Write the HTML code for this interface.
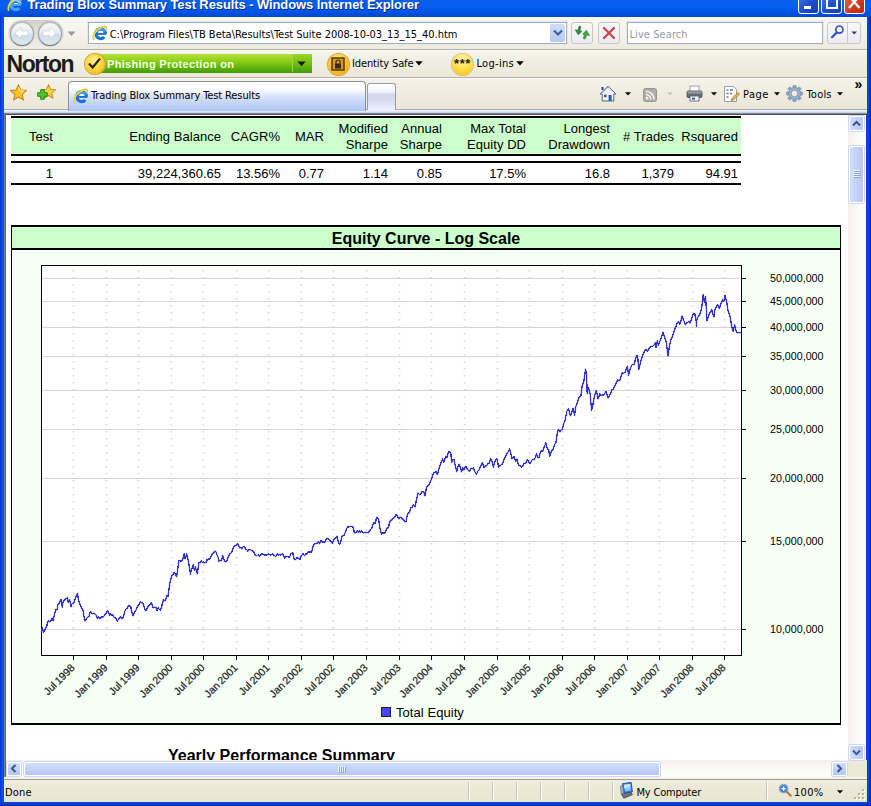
<!DOCTYPE html>
<html>
<head>
<meta charset="utf-8">
<title>Trading Blox Summary Test Results - Windows Internet Explorer</title>
<style>
html,body{margin:0;padding:0;}
body{width:871px;height:806px;overflow:hidden;position:relative;background:#0b3fd2;font-family:"DejaVu Sans Condensed","DejaVu Sans","Liberation Sans",sans-serif;font-size:11px;color:#000;}
.abs{position:absolute;}
.tah{font:11px/14px "DejaVu Sans Condensed","DejaVu Sans","Liberation Sans",sans-serif;white-space:nowrap;letter-spacing:-0.12px;}
#win{position:absolute;left:0;top:0;width:871px;height:806px;background:#0a41d4;}
#win:before{content:"";position:absolute;left:0;top:0;width:4px;height:806px;background:linear-gradient(to right,#0831d9,#0a44e8 40%,#1158ee 70%,#0a3fd0);}
#win:after{content:"";position:absolute;right:0;top:0;width:4px;height:806px;background:linear-gradient(to right,#0a3fd0,#0a44e0 40%,#0831c9 70%,#04219a);}
#winbot{position:absolute;left:0;top:802px;width:871px;height:4px;background:linear-gradient(#0a44dc,#0a3cd0 50%,#04259e);}
#titlebar{position:absolute;left:0;top:0;width:871px;height:17px;overflow:hidden;background:linear-gradient(to bottom,#0a5ce6 0,#0560f0 5px,#0355e6 11px,#0148d2 17px);}
#titletext{position:absolute;left:27.4px;top:-3.4px;font:bold 13px/16px "Liberation Sans",sans-serif;color:#fff;white-space:nowrap;letter-spacing:-0.1px;text-shadow:1px 1px 0 #0a2a8a;}
.tbtn{position:absolute;top:-8px;height:22px;width:21px;border:1px solid #fff;border-radius:3px;box-sizing:border-box;}
#chrome{position:absolute;left:4px;top:17px;width:863px;height:96px;background:#efecdf;}
#navbar{position:absolute;left:0;top:0;width:863px;height:32px;background:linear-gradient(to bottom,#f9f9f5,#f4f3ec 50%,#eeebe0);border-top:1px solid #fff;box-sizing:border-box}
#nortonbar{position:absolute;left:0;top:32px;width:863px;height:28px;background:linear-gradient(to bottom,#f6f5ec,#efede1 50%,#ece9db);border-top:1px solid #b4b1a3;box-shadow:inset 0 1px 0 #fbfaf6;box-sizing:border-box;}
#tabbar{position:absolute;left:0;top:60px;width:863px;height:33px;background:linear-gradient(to bottom,#f5f3ea,#efecdf 50%,#ebe7d7);border-top:1px solid #b4b1a3;border-bottom:1px solid #a9aab0;box-shadow:inset 0 1px 0 #fbfaf6;box-sizing:border-box;}
#tabstrip{position:absolute;left:0;top:93px;width:863px;height:5px;background:linear-gradient(#f2f6fe 0,#dde6fa 30%,#c2cce4 58%,#8b909c 62%,#7a7e88 80%,#4a4d53 82%,#4a4d53 100%)}
#content{position:absolute;left:6px;top:115px;width:842px;height:645px;background:#fff;}
#cleft{position:absolute;left:4px;top:113px;width:2px;height:665px;background:linear-gradient(to right,#8c8e90,#55575a);}
#vscroll{position:absolute;left:848px;top:115px;width:18px;height:646px;background:linear-gradient(to right,#f1f0ea,#fbfaf8 50%,#fefefd);}
#hscroll{position:absolute;left:6px;top:760px;width:842px;height:17px;background:linear-gradient(#f1f0ea,#fbfaf8 50%,#fefefd);}
#corner{position:absolute;left:848px;top:760px;width:19px;height:17px;background:#ece9d8;}
#statusbar{position:absolute;left:4px;top:777px;width:863px;height:25px;background:linear-gradient(#f6f5ef 0,#f3f2ea 2px,#9f9c8a 2px,#9f9c8a 3px,#f1efe3 3px,#ece9d8 9px,#e9e5d4 100%);}

.th{position:absolute;letter-spacing:0.04px;font:13px/16px "Liberation Sans",sans-serif;text-align:right;white-space:nowrap;color:#000;}
.td{position:absolute;font:13px/16px "Liberation Sans",sans-serif;text-align:right;white-space:nowrap;color:#000;}
.ctitle{position:absolute;font:bold 16px/18px "Liberation Sans",sans-serif;text-align:center;color:#000;}
.ytitle{position:absolute;font:bold 16px/18px "Liberation Sans",sans-serif;white-space:nowrap;color:#000;}
</style>
</head>
<body>
<div id="win"></div><div id="winbot"></div>
<div id="titlebar">
<svg class="abs" style="left:7px;top:-4px" width="16" height="16" viewBox="0 0 16 16"><path d="M13.5 8.6A4.9 4.9 0 1 0 12.3 12" fill="none" stroke="#4aa2f2" stroke-width="3.2"/><path d="M13.1 7.2A4.9 4.9 0 0 0 4.2 6.2" fill="none" stroke="#86c6fb" stroke-width="2.8"/><path d="M4.4 8.8H14.4" stroke="#4aa2f2" stroke-width="2.2"/><path d="M6.8 7.4h4.2" stroke="#fff" stroke-width="1"/><path d="M1.6 14.2C-.2 10.2 4.6 3.4 11 1.6c2.4-.6 3.8.3 3.4 2.2" stroke="#e6c22a" stroke-width="1.7" fill="none" stroke-linecap="round"/><path d="M1.8 13.6C.8 10.4 4.8 4.4 10 2.4" stroke="#f8e878" stroke-width=".7" fill="none"/></svg>
<div id="titletext">Trading Blox Summary Test Results - Windows Internet Explorer</div>
<div class="tbtn" style="left:798px;background:linear-gradient(135deg,#3f78ee,#1c4cc8 60%,#1540b4)"><div class="abs" style="left:5px;top:13px;width:7px;height:3px;background:#fff"></div></div>
<div class="tbtn" style="left:821px;background:linear-gradient(135deg,#3f78ee,#1c4cc8 60%,#1540b4)"><div class="abs" style="left:4px;top:0px;width:8px;height:11px;border:2px solid #fff;border-top-width:3px"></div></div>
<div class="tbtn" style="left:844px;background:linear-gradient(135deg,#e8694a,#d03a1c 60%,#b82a10)"><svg class="abs" style="left:1px;top:3px" width="17" height="16" viewBox="0 0 17 16"><path d="M3 0L13.5 12M13.5 0L3 12" stroke="#fff" stroke-width="2.4"/></svg></div>
</div>
<div id="chrome"><div id="navbar"></div><div id="nortonbar"></div><div id="tabbar"></div><div id="tabstrip"></div></div>
<div class="abs" style="left:7.5px;top:19.5px;width:56px;height:28px;border-radius:14px;background:linear-gradient(#cfcec8,#e4e2da 40%,#f0eee6);"></div>
<div class="abs" style="left:9.5px;top:21.5px;width:24px;height:24px;border-radius:50%;box-sizing:border-box;border:1px solid #9aa0a8;border-bottom-color:#6c727c;border-top-color:#b4b4b0;background:linear-gradient(#f6f8fa 0,#e6ecf1 45%,#cfdde8 55%,#ddeaf2 100%);box-shadow:0 0 1.5px #8a8a86"></div>
<div class="abs" style="left:37.5px;top:21.5px;width:24px;height:24px;border-radius:50%;box-sizing:border-box;border:1px solid #9aa0a8;border-bottom-color:#6c727c;border-top-color:#b4b4b0;background:linear-gradient(#f6f8fa 0,#e6ecf1 45%,#cfdde8 55%,#ddeaf2 100%);box-shadow:0 0 1.5px #8a8a86"></div>
<svg class="abs" style="left:9px;top:21px" width="54" height="24" viewBox="0 0 54 24"><path d="M6 12.2l6-5.6v3.4h7v4.4h-7v3.4z" fill="#fff" stroke="#c4ccd4" stroke-width=".6"/><path d="M47 12.2l-6-5.6v3.4h-7v4.4h7v3.4z" fill="#fff" stroke="#c4ccd4" stroke-width=".6"/></svg>
<svg class="abs" style="left:67px;top:31px" width="9" height="6" viewBox="0 0 9 6"><path d="M0.5 0.5h8L4.5 5z" fill="#9a9a96"/></svg>
<div class="abs" style="left:88px;top:22px;width:479px;height:22px;box-sizing:border-box;border:1px solid #9fb0c2;background:#fff;box-shadow:0 0 0 1px #e9e9e2"></div>
<svg class="abs" style="left:92px;top:25px" width="16" height="16" viewBox="0 0 16 16"><path d="M13.5 8.6A4.9 4.9 0 1 0 12.3 12" fill="none" stroke="#1c72d0" stroke-width="3.2"/><path d="M13.1 7.2A4.9 4.9 0 0 0 4.2 6.2" fill="none" stroke="#3c9aec" stroke-width="2.8"/><path d="M4.4 8.8H14.4" stroke="#1c72d0" stroke-width="2.2"/><path d="M6.8 7.4h4.2" stroke="#fff" stroke-width="1"/><path d="M1.6 14.2C-.2 10.2 4.6 3.4 11 1.6c2.4-.6 3.8.3 3.4 2.2" stroke="#e6c22a" stroke-width="1.7" fill="none" stroke-linecap="round"/><path d="M1.8 13.6C.8 10.4 4.8 4.4 10 2.4" stroke="#f8e878" stroke-width=".7" fill="none"/></svg>
<div class="abs tah" style="left:109.7px;top:27.5px;letter-spacing:-0.01px">C:\Program Files\TB Beta\Results\Test Suite 2008-10-03_13_15_40.htm</div>
<div class="abs" style="left:550px;top:24px;width:15px;height:18px;background:linear-gradient(#cddcf8,#b7caf2);border-radius:2px"></div>
<svg class="abs" style="left:553px;top:29px" width="10" height="8" viewBox="0 0 10 8"><path d="M1 1.5l4 4 4-4" stroke="#3a5a9a" stroke-width="2" fill="none"/></svg>
<div class="abs" style="left:571px;top:22px;width:22px;height:22px;box-sizing:border-box;border:1px solid #c9c7c1;border-radius:3px;background:linear-gradient(#f8f7fa,#ecebf2)"></div>
<div class="abs" style="left:598px;top:22px;width:22px;height:22px;box-sizing:border-box;border:1px solid #c9c7c1;border-radius:3px;background:linear-gradient(#f8f7fa,#ecebf2)"></div>
<svg class="abs" style="left:574px;top:25px" width="16" height="16" viewBox="0 0 16 16"><path d="M5 1.1L7 1.7 5.9 5.6 8 6.2 4.2 9.9 1.2 4.8 3.8 5.3z" fill="#2e8e3a" stroke="#1c6426" stroke-width=".5"/><path d="M11.2 14.1L9.2 13.5 10.4 9.6 8.6 9.1 12.4 5.3 15.6 10.4 12.8 9.9z" fill="#44aa48" stroke="#1c6426" stroke-width=".5"/></svg>
<svg class="abs" style="left:602px;top:26px" width="14" height="14" viewBox="0 0 14 14"><path d="M2 2l10 10M12 2L2 12" stroke="#c8474a" stroke-width="2.3" stroke-linecap="round"/></svg>
<div class="abs" style="left:627px;top:22px;width:196px;height:22px;box-sizing:border-box;border:1px solid #9fb0c2;background:#fff;box-shadow:0 0 0 1px #e9e9e2"></div>
<div class="abs tah" style="left:629.5px;top:27.5px;letter-spacing:0.08px;color:#9a9a9a">Live Search</div>
<div class="abs" style="left:827px;top:22px;width:34px;height:22px;box-sizing:border-box;border:1px solid #ccc9c2;border-radius:3px;background:linear-gradient(#f8f7fa,#ecebf2)"></div>
<div class="abs" style="left:847px;top:23px;width:1px;height:20px;background:#c9c7c0"></div>
<svg class="abs" style="left:830px;top:24px" width="16" height="16" viewBox="0 0 16 16"><circle cx="9.4" cy="5.6" r="3.6" fill="#eef4ff" stroke="#2d55b8" stroke-width="1.7"/><path d="M6.6 8.6L2 13.2" stroke="#2d55b8" stroke-width="2.2" stroke-linecap="round"/></svg>
<svg class="abs" style="left:850.5px;top:30.5px" width="6.5" height="4" viewBox="0 0 8 5"><path d="M0.5 0.5h7L4 4.5z" fill="#2a3a6a"/></svg>
<div class="abs" style="left:6.5px;top:50.5px;font:bold 23px/26px 'Liberation Sans',sans-serif;letter-spacing:-1.45px;color:#1c1c1c;transform-origin:0 0;transform:scaleY(1.0)">Norton</div>
<div class="abs" style="left:92px;top:54px;width:220px;height:19px;border-radius:2px;background:linear-gradient(#b5e23a 0,#8fd01a 35%,#62b40e 70%,#3f9a0c 100%)"></div>
<div class="abs" style="left:292px;top:55px;width:1px;height:17px;background:#9ed25a"></div>
<div class="abs" style="left:293px;top:54px;width:19px;height:19px;background:linear-gradient(#9fd62a 0,#74be12 50%,#3f9a0c 100%)"></div>
<svg class="abs" style="left:297px;top:61px" width="9" height="6" viewBox="0 0 9 6"><path d="M0.3 0.5h8.4L4.5 5.2z" fill="#10200a"/></svg>
<div class="abs" style="left:107px;top:56.5px;font:bold 11px/14px 'Liberation Sans',sans-serif;color:#f4ffe0;letter-spacing:0.31px;white-space:nowrap">Phishing Protection on</div>
<div class="abs" style="left:84.5px;top:53.5px;width:20px;height:20px;border-radius:50%;background:radial-gradient(circle at 45% 35%,#fff0a0 0,#fcd83a 45%,#f0a818 100%);box-shadow:0 0 0 1px #d8a030"></div>
<svg class="abs" style="left:86px;top:56px" width="18" height="15" viewBox="0 0 18 15"><path d="M3 7.5l3.6 4L14 2.6" stroke="#2a2410" stroke-width="2.2" fill="none"/></svg>
<div class="abs" style="left:327.5px;top:53.5px;width:21px;height:21px;border-radius:50%;background:radial-gradient(circle at 45% 30%,#ffe88a 0,#f8c020 55%,#f0a010 100%);box-shadow:0 0 0 1px #e0a030"></div>
<svg class="abs" style="left:331px;top:57px" width="14" height="14" viewBox="0 0 14 14"><rect x="1" y="1" width="12" height="12" fill="#d69a20" stroke="#4a3010" stroke-width="1.4"/><rect x="4" y="6.5" width="6" height="5" fill="#3a2a18"/><path d="M5 6.8V5a2 2 0 014 0v1.8" stroke="#3a2a18" stroke-width="1.2" fill="none"/></svg>
<div class="abs tah" style="left:352px;top:57px">Identity Safe</div>
<svg class="abs" style="left:415px;top:61px" width="8" height="5" viewBox="0 0 8 5"><path d="M0.3 0.3h7.4L4 4.6z" fill="#000"/></svg>
<div class="abs" style="left:452px;top:53.5px;width:21px;height:21px;border-radius:50%;background:radial-gradient(circle at 50% 25%,#fff6b0 0,#fde050 50%,#f4c000 100%);box-shadow:0 0 0 1px #dcc070"></div>
<div class="abs" style="left:454px;top:57px;font:bold 13px/14px 'Liberation Sans',sans-serif;letter-spacing:0.6px;color:#201808">***</div>
<div class="abs tah" style="left:476.5px;top:57px;letter-spacing:0.3px">Log-ins</div>
<svg class="abs" style="left:516px;top:61px" width="8" height="5" viewBox="0 0 8 5"><path d="M0.3 0.3h7.4L4 4.6z" fill="#000"/></svg>
<svg class="abs" style="left:10px;top:84px" width="17" height="17" viewBox="0 0 16 16"><path d="M8 0.8l2.2 4.9 5.2.5-3.9 3.5 1.1 5.2L8 12.2l-4.6 2.7 1.1-5.2L.6 6.2l5.2-.5z" fill="#fdc228" stroke="#c8861a" stroke-width="1"/><path d="M8 3l1.4 3.4 3.4.3-2.4 2.2" fill="none" stroke="#ffe890" stroke-width="1"/></svg>
<svg class="abs" style="left:41px;top:84px" width="15" height="15" viewBox="0 0 16 16"><path d="M8 0.8l2.2 4.9 5.2.5-3.9 3.5 1.1 5.2L8 12.2l-4.6 2.7 1.1-5.2L.6 6.2l5.2-.5z" fill="#fdd048" stroke="#c8921a" stroke-width="1.1"/></svg>
<svg class="abs" style="left:37px;top:89px" width="11" height="11" viewBox="0 0 11 11"><path d="M3.7 0.7h3.6v3h3v3.6h-3v3H3.7v-3h-3V3.7h3z" fill="#58c030" stroke="#2a8a1a" stroke-width="1"/></svg>
<div class="abs" style="left:68px;top:81px;width:298px;height:30px;box-sizing:border-box;border:1px solid #8e9096;border-bottom:none;border-radius:4px 4px 0 0;background:linear-gradient(#ffffff 0,#f8fbff 28%,#d3e1fa 52%,#adc6f4 100%)"></div>
<svg class="abs" style="left:73px;top:88px" width="16" height="16" viewBox="0 0 16 16"><path d="M13.5 8.6A4.9 4.9 0 1 0 12.3 12" fill="none" stroke="#1c72d0" stroke-width="3.2"/><path d="M13.1 7.2A4.9 4.9 0 0 0 4.2 6.2" fill="none" stroke="#3c9aec" stroke-width="2.8"/><path d="M4.4 8.8H14.4" stroke="#1c72d0" stroke-width="2.2"/><path d="M6.8 7.4h4.2" stroke="#fff" stroke-width="1"/><path d="M1.6 14.2C-.2 10.2 4.6 3.4 11 1.6c2.4-.6 3.8.3 3.4 2.2" stroke="#e6c22a" stroke-width="1.7" fill="none" stroke-linecap="round"/><path d="M1.8 13.6C.8 10.4 4.8 4.4 10 2.4" stroke="#f8e878" stroke-width=".7" fill="none"/></svg>
<div class="abs tah" style="left:91px;top:89px;letter-spacing:-0.11px">Trading Blox Summary Test Results</div>
<div class="abs" style="left:367px;top:83px;width:29px;height:27px;box-sizing:border-box;border:1px solid #9a9ca2;border-bottom:none;border-radius:3px 3px 0 0;background:linear-gradient(#ffffff 0,#f4f5fc 30%,#d2d6ee 40%,#d8dcf2 65%,#eef0fa 100%)"></div>
<svg class="abs" style="left:599px;top:85px" width="18" height="17" viewBox="0 0 18 17"><path d="M2.5 2h2v3h-2z" fill="#2a3ab8"/><path d="M9 1.2L1 9h2.2v7h11.6V9H17z" fill="#eef2f6" stroke="#55657a" stroke-width="1"/><path d="M9 1.6L1.8 8.6" stroke="#8a98a8" stroke-width="1.3"/><rect x="9.6" y="10" width="3" height="6" fill="#2a5aa8"/><rect x="5" y="9.6" width="2.6" height="2.6" fill="#4a5a70"/></svg>
<svg class="abs" style="left:625px;top:92px" width="6" height="4" viewBox="0 0 6 4"><path d="M0 0.3h6L3 3.6z" fill="#000"/></svg>
<svg class="abs" style="left:643px;top:88px" width="14" height="14" viewBox="0 0 14 14"><rect x=".5" y=".5" width="13" height="13" rx="2" fill="#adada5" stroke="#96968e"/><circle cx="4" cy="10.2" r="1.4" fill="#f2f2ee"/><path d="M2.8 6.4a5 5 0 015 5M2.8 3.2a8.2 8.2 0 018.2 8.2" stroke="#f2f2ee" stroke-width="1.6" fill="none"/></svg>
<svg class="abs" style="left:667px;top:92px" width="6" height="4" viewBox="0 0 6 4"><path d="M0 0.3h6L3 3.6z" fill="#c8c6ba"/></svg>
<svg class="abs" style="left:686px;top:85px" width="17" height="17" viewBox="0 0 17 17"><rect x="4" y="1" width="9" height="6" fill="#fff" stroke="#8a8f98" stroke-width=".8"/><rect x="1" y="6" width="15" height="6.5" rx="1.2" fill="#6a7078" stroke="#42474e" stroke-width=".8"/><rect x="1.5" y="6.4" width="14" height="2" fill="#9aa0a8"/><rect x="4" y="11" width="9" height="5" fill="#f4f6f8" stroke="#555a62" stroke-width=".8"/><rect x="6" y="12.6" width="3" height="2" fill="#3a5ab0"/></svg>
<svg class="abs" style="left:711px;top:92px" width="6" height="4" viewBox="0 0 6 4"><path d="M0 0.3h6L3 3.6z" fill="#000"/></svg>
<svg class="abs" style="left:723px;top:85px" width="18" height="18" viewBox="0 0 18 18"><path d="M1.5 1.5h9l3 3v12h-12z" fill="#fbfbfb" stroke="#9a9ea8" stroke-width="1"/><path d="M3.5 5h2M3.5 8.5h2M3.5 12h2M7 5h3M7 8.5h2" stroke="#6a7a9a" stroke-width="1.3"/><path d="M9 13.5l6-6 1.5 1.5-6 6-2.2.7z" fill="#e8b848" stroke="#8a6a20" stroke-width=".7"/></svg>
<div class="abs tah" style="left:743px;top:87.5px;letter-spacing:0.5px">Page</div>
<svg class="abs" style="left:774px;top:92px" width="6" height="4" viewBox="0 0 6 4"><path d="M0 0.3h6L3 3.6z" fill="#000"/></svg>
<svg class="abs" style="left:786px;top:85px" width="17" height="17" viewBox="0 0 17 17"><g transform="translate(8.5 8.5)"><g fill="#8aa4c0" stroke="#6a88a8" stroke-width=".4"><rect x="-1.7" y="-8.2" width="3.4" height="16.4" rx=".6"/><rect x="-1.7" y="-8.2" width="3.4" height="16.4" rx=".6" transform="rotate(45)"/><rect x="-1.7" y="-8.2" width="3.4" height="16.4" rx=".6" transform="rotate(90)"/><rect x="-1.7" y="-8.2" width="3.4" height="16.4" rx=".6" transform="rotate(135)"/></g><circle r="6" fill="#9ab4d0" stroke="#6a88a8" stroke-width=".6"/><circle r="3.4" fill="#f0ede0" stroke="#6a88a8" stroke-width=".8"/></g></svg>
<div class="abs tah" style="left:806.5px;top:87.5px;letter-spacing:0.2px">Tools</div>
<svg class="abs" style="left:836.5px;top:92px" width="6" height="4" viewBox="0 0 6 4"><path d="M0 0.3h6L3 3.6z" fill="#000"/></svg>
<div class="abs" style="left:854.5px;top:76px;font:bold 14px/16px 'Liberation Sans',sans-serif;letter-spacing:-1px;color:#000">»</div>
<div id="content"></div><div id="cleft"></div>
<div class="abs" style="left:11px;top:116px;width:730px;height:2px;background:#000"></div>
<div class="abs" style="left:11px;top:118px;width:730px;height:36px;background:#ccffcc"></div>
<div class="abs" style="left:11px;top:154px;width:730px;height:2px;background:#000"></div>
<div class="abs" style="left:11px;top:161px;width:730px;height:2px;background:#000"></div>
<div class="abs" style="left:11px;top:183px;width:730px;height:2px;background:#000"></div>
<div class="th" style="right:818px;top:129px">Test</div>
<div class="td" style="right:818px;top:166px">1</div>
<div class="th" style="right:650px;top:129px">Ending Balance</div>
<div class="td" style="right:650px;top:166px">39,224,360.65</div>
<div class="th" style="right:591px;top:129px">CAGR%</div>
<div class="td" style="right:591px;top:166px">13.56%</div>
<div class="th" style="right:547px;top:129px">MAR</div>
<div class="td" style="right:547px;top:166px">0.77</div>
<div class="th" style="right:483px;top:121px">Modified<br>Sharpe</div>
<div class="td" style="right:483px;top:166px">1.14</div>
<div class="th" style="right:429px;top:121px">Annual<br>Sharpe</div>
<div class="td" style="right:429px;top:166px">0.85</div>
<div class="th" style="right:345px;top:121px">Max Total<br>Equity DD</div>
<div class="td" style="right:345px;top:166px">17.5%</div>
<div class="th" style="right:261px;top:121px">Longest<br>Drawdown</div>
<div class="td" style="right:261px;top:166px">16.8</div>
<div class="th" style="right:197px;top:129px"># Trades</div>
<div class="td" style="right:197px;top:166px">1,379</div>
<div class="th" style="right:133px;top:129px">Rsquared</div>
<div class="td" style="right:133px;top:166px">94.91</div>
<div class="abs" style="left:11px;top:225px;width:830px;height:500px;background:#000"></div>
<div class="abs" style="left:12px;top:227px;width:828px;height:21px;background:#ccffcc"></div>
<div class="abs" style="left:12px;top:250px;width:828px;height:473px;background:#f6fff6"></div>
<div class="ctitle" style="left:12px;top:230px;width:828px">Equity Curve - Log Scale</div>
<svg class="abs" style="left:12px;top:250px" width="828" height="473" viewBox="0 0 828 473" font-family="Liberation Sans, sans-serif"><rect x="29.5" y="15.5" width="700" height="390" fill="#fff" stroke="#000" stroke-width="1"/><line x1="30" y1="28.5" x2="729" y2="28.5" stroke="#d4d4d4" stroke-width="1"/><line x1="729" y1="28.5" x2="734" y2="28.5" stroke="#000" stroke-width="1"/><text x="811.5" y="32.3" font-size="10.7" text-anchor="end" fill="#000">50,000,000</text><line x1="30" y1="51.5" x2="729" y2="51.5" stroke="#d4d4d4" stroke-width="1"/><line x1="729" y1="51.5" x2="734" y2="51.5" stroke="#000" stroke-width="1"/><text x="811.5" y="55.3" font-size="10.7" text-anchor="end" fill="#000">45,000,000</text><line x1="30" y1="77.5" x2="729" y2="77.5" stroke="#d4d4d4" stroke-width="1"/><line x1="729" y1="77.5" x2="734" y2="77.5" stroke="#000" stroke-width="1"/><text x="811.5" y="81.3" font-size="10.7" text-anchor="end" fill="#000">40,000,000</text><line x1="30" y1="106.5" x2="729" y2="106.5" stroke="#d4d4d4" stroke-width="1"/><line x1="729" y1="106.5" x2="734" y2="106.5" stroke="#000" stroke-width="1"/><text x="811.5" y="110.3" font-size="10.7" text-anchor="end" fill="#000">35,000,000</text><line x1="30" y1="140.5" x2="729" y2="140.5" stroke="#d4d4d4" stroke-width="1"/><line x1="729" y1="140.5" x2="734" y2="140.5" stroke="#000" stroke-width="1"/><text x="811.5" y="144.3" font-size="10.7" text-anchor="end" fill="#000">30,000,000</text><line x1="30" y1="179.5" x2="729" y2="179.5" stroke="#d4d4d4" stroke-width="1"/><line x1="729" y1="179.5" x2="734" y2="179.5" stroke="#000" stroke-width="1"/><text x="811.5" y="183.3" font-size="10.7" text-anchor="end" fill="#000">25,000,000</text><line x1="30" y1="228.5" x2="729" y2="228.5" stroke="#d4d4d4" stroke-width="1"/><line x1="729" y1="228.5" x2="734" y2="228.5" stroke="#000" stroke-width="1"/><text x="811.5" y="232.3" font-size="10.7" text-anchor="end" fill="#000">20,000,000</text><line x1="30" y1="291.5" x2="729" y2="291.5" stroke="#d4d4d4" stroke-width="1"/><line x1="729" y1="291.5" x2="734" y2="291.5" stroke="#000" stroke-width="1"/><text x="811.5" y="295.3" font-size="10.7" text-anchor="end" fill="#000">15,000,000</text><line x1="30" y1="379.5" x2="729" y2="379.5" stroke="#d4d4d4" stroke-width="1"/><line x1="729" y1="379.5" x2="734" y2="379.5" stroke="#000" stroke-width="1"/><text x="811.5" y="383.3" font-size="10.7" text-anchor="end" fill="#000">10,000,000</text><line x1="61.5" y1="20" x2="61.5" y2="405" stroke="#d6d6d6" stroke-width="1.6" stroke-dasharray="1.6 5.4"/><line x1="61.5" y1="405" x2="61.5" y2="410" stroke="#000" stroke-width="1"/><text transform="translate(63.4 418.4) rotate(-45)" font-size="10.5" word-spacing="-1" text-anchor="end" fill="#1c1c1c" stroke="#1c1c1c" stroke-width="0.2">Jul 1998</text><line x1="94.5" y1="20" x2="94.5" y2="405" stroke="#d6d6d6" stroke-width="1.6" stroke-dasharray="1.6 5.4"/><line x1="94.5" y1="405" x2="94.5" y2="410" stroke="#000" stroke-width="1"/><text transform="translate(96.4 418.4) rotate(-45)" font-size="10.5" word-spacing="-1" text-anchor="end" fill="#1c1c1c" stroke="#1c1c1c" stroke-width="0.2">Jan 1999</text><line x1="126.5" y1="20" x2="126.5" y2="405" stroke="#d6d6d6" stroke-width="1.6" stroke-dasharray="1.6 5.4"/><line x1="126.5" y1="405" x2="126.5" y2="410" stroke="#000" stroke-width="1"/><text transform="translate(128.4 418.4) rotate(-45)" font-size="10.5" word-spacing="-1" text-anchor="end" fill="#1c1c1c" stroke="#1c1c1c" stroke-width="0.2">Jul 1999</text><line x1="159.5" y1="20" x2="159.5" y2="405" stroke="#d6d6d6" stroke-width="1.6" stroke-dasharray="1.6 5.4"/><line x1="159.5" y1="405" x2="159.5" y2="410" stroke="#000" stroke-width="1"/><text transform="translate(161.4 418.4) rotate(-45)" font-size="10.5" word-spacing="-1" text-anchor="end" fill="#1c1c1c" stroke="#1c1c1c" stroke-width="0.2">Jan 2000</text><line x1="191.5" y1="20" x2="191.5" y2="405" stroke="#d6d6d6" stroke-width="1.6" stroke-dasharray="1.6 5.4"/><line x1="191.5" y1="405" x2="191.5" y2="410" stroke="#000" stroke-width="1"/><text transform="translate(193.4 418.4) rotate(-45)" font-size="10.5" word-spacing="-1" text-anchor="end" fill="#1c1c1c" stroke="#1c1c1c" stroke-width="0.2">Jul 2000</text><line x1="224.5" y1="20" x2="224.5" y2="405" stroke="#d6d6d6" stroke-width="1.6" stroke-dasharray="1.6 5.4"/><line x1="224.5" y1="405" x2="224.5" y2="410" stroke="#000" stroke-width="1"/><text transform="translate(226.4 418.4) rotate(-45)" font-size="10.5" word-spacing="-1" text-anchor="end" fill="#1c1c1c" stroke="#1c1c1c" stroke-width="0.2">Jan 2001</text><line x1="256.5" y1="20" x2="256.5" y2="405" stroke="#d6d6d6" stroke-width="1.6" stroke-dasharray="1.6 5.4"/><line x1="256.5" y1="405" x2="256.5" y2="410" stroke="#000" stroke-width="1"/><text transform="translate(258.4 418.4) rotate(-45)" font-size="10.5" word-spacing="-1" text-anchor="end" fill="#1c1c1c" stroke="#1c1c1c" stroke-width="0.2">Jul 2001</text><line x1="289.5" y1="20" x2="289.5" y2="405" stroke="#d6d6d6" stroke-width="1.6" stroke-dasharray="1.6 5.4"/><line x1="289.5" y1="405" x2="289.5" y2="410" stroke="#000" stroke-width="1"/><text transform="translate(291.4 418.4) rotate(-45)" font-size="10.5" word-spacing="-1" text-anchor="end" fill="#1c1c1c" stroke="#1c1c1c" stroke-width="0.2">Jan 2002</text><line x1="321.5" y1="20" x2="321.5" y2="405" stroke="#d6d6d6" stroke-width="1.6" stroke-dasharray="1.6 5.4"/><line x1="321.5" y1="405" x2="321.5" y2="410" stroke="#000" stroke-width="1"/><text transform="translate(323.4 418.4) rotate(-45)" font-size="10.5" word-spacing="-1" text-anchor="end" fill="#1c1c1c" stroke="#1c1c1c" stroke-width="0.2">Jul 2002</text><line x1="354.5" y1="20" x2="354.5" y2="405" stroke="#d6d6d6" stroke-width="1.6" stroke-dasharray="1.6 5.4"/><line x1="354.5" y1="405" x2="354.5" y2="410" stroke="#000" stroke-width="1"/><text transform="translate(356.4 418.4) rotate(-45)" font-size="10.5" word-spacing="-1" text-anchor="end" fill="#1c1c1c" stroke="#1c1c1c" stroke-width="0.2">Jan 2003</text><line x1="387.5" y1="20" x2="387.5" y2="405" stroke="#d6d6d6" stroke-width="1.6" stroke-dasharray="1.6 5.4"/><line x1="387.5" y1="405" x2="387.5" y2="410" stroke="#000" stroke-width="1"/><text transform="translate(389.4 418.4) rotate(-45)" font-size="10.5" word-spacing="-1" text-anchor="end" fill="#1c1c1c" stroke="#1c1c1c" stroke-width="0.2">Jul 2003</text><line x1="419.5" y1="20" x2="419.5" y2="405" stroke="#d6d6d6" stroke-width="1.6" stroke-dasharray="1.6 5.4"/><line x1="419.5" y1="405" x2="419.5" y2="410" stroke="#000" stroke-width="1"/><text transform="translate(421.4 418.4) rotate(-45)" font-size="10.5" word-spacing="-1" text-anchor="end" fill="#1c1c1c" stroke="#1c1c1c" stroke-width="0.2">Jan 2004</text><line x1="452.5" y1="20" x2="452.5" y2="405" stroke="#d6d6d6" stroke-width="1.6" stroke-dasharray="1.6 5.4"/><line x1="452.5" y1="405" x2="452.5" y2="410" stroke="#000" stroke-width="1"/><text transform="translate(454.4 418.4) rotate(-45)" font-size="10.5" word-spacing="-1" text-anchor="end" fill="#1c1c1c" stroke="#1c1c1c" stroke-width="0.2">Jul 2004</text><line x1="485.5" y1="20" x2="485.5" y2="405" stroke="#d6d6d6" stroke-width="1.6" stroke-dasharray="1.6 5.4"/><line x1="485.5" y1="405" x2="485.5" y2="410" stroke="#000" stroke-width="1"/><text transform="translate(487.4 418.4) rotate(-45)" font-size="10.5" word-spacing="-1" text-anchor="end" fill="#1c1c1c" stroke="#1c1c1c" stroke-width="0.2">Jan 2005</text><line x1="517.5" y1="20" x2="517.5" y2="405" stroke="#d6d6d6" stroke-width="1.6" stroke-dasharray="1.6 5.4"/><line x1="517.5" y1="405" x2="517.5" y2="410" stroke="#000" stroke-width="1"/><text transform="translate(519.4 418.4) rotate(-45)" font-size="10.5" word-spacing="-1" text-anchor="end" fill="#1c1c1c" stroke="#1c1c1c" stroke-width="0.2">Jul 2005</text><line x1="550.5" y1="20" x2="550.5" y2="405" stroke="#d6d6d6" stroke-width="1.6" stroke-dasharray="1.6 5.4"/><line x1="550.5" y1="405" x2="550.5" y2="410" stroke="#000" stroke-width="1"/><text transform="translate(552.4 418.4) rotate(-45)" font-size="10.5" word-spacing="-1" text-anchor="end" fill="#1c1c1c" stroke="#1c1c1c" stroke-width="0.2">Jan 2006</text><line x1="582.5" y1="20" x2="582.5" y2="405" stroke="#d6d6d6" stroke-width="1.6" stroke-dasharray="1.6 5.4"/><line x1="582.5" y1="405" x2="582.5" y2="410" stroke="#000" stroke-width="1"/><text transform="translate(584.4 418.4) rotate(-45)" font-size="10.5" word-spacing="-1" text-anchor="end" fill="#1c1c1c" stroke="#1c1c1c" stroke-width="0.2">Jul 2006</text><line x1="615.5" y1="20" x2="615.5" y2="405" stroke="#d6d6d6" stroke-width="1.6" stroke-dasharray="1.6 5.4"/><line x1="615.5" y1="405" x2="615.5" y2="410" stroke="#000" stroke-width="1"/><text transform="translate(617.4 418.4) rotate(-45)" font-size="10.5" word-spacing="-1" text-anchor="end" fill="#1c1c1c" stroke="#1c1c1c" stroke-width="0.2">Jan 2007</text><line x1="647.5" y1="20" x2="647.5" y2="405" stroke="#d6d6d6" stroke-width="1.6" stroke-dasharray="1.6 5.4"/><line x1="647.5" y1="405" x2="647.5" y2="410" stroke="#000" stroke-width="1"/><text transform="translate(649.4 418.4) rotate(-45)" font-size="10.5" word-spacing="-1" text-anchor="end" fill="#1c1c1c" stroke="#1c1c1c" stroke-width="0.2">Jul 2007</text><line x1="680.5" y1="20" x2="680.5" y2="405" stroke="#d6d6d6" stroke-width="1.6" stroke-dasharray="1.6 5.4"/><line x1="680.5" y1="405" x2="680.5" y2="410" stroke="#000" stroke-width="1"/><text transform="translate(682.4 418.4) rotate(-45)" font-size="10.5" word-spacing="-1" text-anchor="end" fill="#1c1c1c" stroke="#1c1c1c" stroke-width="0.2">Jan 2008</text><line x1="712.5" y1="20" x2="712.5" y2="405" stroke="#d6d6d6" stroke-width="1.6" stroke-dasharray="1.6 5.4"/><line x1="712.5" y1="405" x2="712.5" y2="410" stroke="#000" stroke-width="1"/><text transform="translate(714.4 418.4) rotate(-45)" font-size="10.5" word-spacing="-1" text-anchor="end" fill="#1c1c1c" stroke="#1c1c1c" stroke-width="0.2">Jul 2008</text><defs><path id="eq" d="M29.5 382.0 L30.5 378.0 L31.3 382.0 L32.9 380.1 L33.8 377.8 L34.7 376.4 L35.6 372.3 L36.5 371.1 L37.5 371.8 L38.6 371.0 L39.6 369.0 L40.7 368.2 L41.2 370.9 L42.5 363.6 L43.9 359.4 L45.3 359.9 L45.7 355.3 L46.8 353.6 L47.9 351.5 L49.0 349.8 L50.3 357.1 L50.8 352.6 L51.7 350.4 L52.6 350.6 L53.6 348.3 L54.5 348.5 L55.4 347.5 L56.3 352.6 L57.2 349.8 L58.2 352.1 L59.1 356.7 L60.0 354.0 L60.9 353.4 L61.8 352.8 L62.7 350.3 L63.6 347.0 L64.6 345.4 L65.5 343.4 L66.4 349.8 L67.3 352.6 L68.3 355.1 L69.2 357.1 L71.0 360.4 L72.8 370.9 L73.9 369.7 L75.0 368.1 L76.1 366.8 L77.0 366.4 L77.9 362.9 L78.8 361.7 L79.9 363.6 L81.1 363.6 L82.0 363.2 L82.9 364.0 L84.1 365.1 L85.2 368.2 L86.2 366.9 L87.2 367.5 L88.2 368.4 L89.2 366.9 L90.2 367.3 L91.2 366.8 L92.1 366.0 L93.0 364.3 L94.0 363.3 L94.9 361.6 L95.8 360.8 L97.6 365.4 L98.7 364.1 L99.8 365.0 L100.9 365.2 L101.8 366.8 L102.7 367.4 L103.7 368.1 L104.6 369.8 L105.5 370.9 L106.4 369.4 L107.4 368.0 L108.3 366.9 L109.4 368.3 L110.6 368.1 L111.8 365.2 L112.9 361.2 L113.9 359.1 L114.9 358.4 L115.9 356.9 L116.9 355.4 L118.7 356.6 L119.8 362.2 L121.0 365.8 L122.7 361.8 L123.8 360.4 L125.0 357.7 L126.1 355.2 L127.3 354.4 L128.4 352.0 L130.1 352.6 L131.3 354.2 L132.4 357.8 L133.6 360.6 L134.7 359.6 L135.9 356.8 L137.0 355.4 L138.2 354.0 L139.3 352.6 L141.1 357.7 L142.8 357.2 L143.9 357.6 L145.1 360.6 L146.2 357.7 L147.3 359.3 L148.5 360.0 L149.5 357.3 L150.4 353.2 L151.4 349.7 L152.6 350.7 L153.7 349.7 L154.8 345.1 L156.0 346.3 L157.7 333.6 L158.8 329.1 L160.0 325.6 L161.2 324.4 L162.3 322.1 L163.4 324.7 L164.6 326.7 L165.8 318.9 L166.9 310.7 L167.9 310.7 L168.8 311.4 L169.8 311.2 L170.9 308.7 L172.1 303.8 L173.2 308.9 L174.7 303.8 L175.6 307.7 L176.6 311.8 L177.5 318.3 L178.4 323.9 L179.3 319.6 L180.3 318.0 L181.2 314.7 L182.4 319.9 L183.5 317.0 L184.4 320.9 L185.3 323.9 L187.0 312.4 L188.2 312.9 L189.3 310.7 L190.2 312.3 L191.2 312.0 L192.1 313.0 L193.1 312.5 L194.1 312.6 L194.7 309.7 L195.7 310.0 L196.6 308.8 L197.6 309.1 L198.6 307.4 L199.6 305.6 L200.6 303.3 L201.6 302.8 L202.8 301.1 L203.9 301.7 L205.1 305.3 L206.2 307.4 L206.8 311.4 L207.7 310.2 L208.7 310.7 L209.6 310.8 L210.5 305.7 L211.5 308.0 L212.5 310.8 L213.7 311.8 L214.8 310.8 L216.5 306.3 L217.7 303.6 L218.8 303.2 L220.0 301.7 L221.7 296.5 L222.7 295.9 L223.7 295.4 L224.7 295.2 L225.7 293.6 L226.9 295.9 L227.8 297.9 L228.8 297.6 L229.7 298.8 L230.6 297.4 L231.5 296.5 L232.6 297.2 L233.8 299.2 L234.9 299.9 L235.9 301.3 L237.0 299.8 L238.0 299.4 L239.1 300.1 L240.1 300.5 L241.2 301.3 L242.4 303.6 L243.5 305.1 L244.5 305.6 L245.5 305.5 L246.5 304.7 L247.5 306.3 L248.6 304.9 L249.8 304.0 L251.0 304.2 L252.1 305.1 L253.0 305.1 L253.9 305.1 L254.9 305.0 L255.8 304.2 L256.7 304.0 L257.9 304.9 L259.0 305.1 L260.7 304.0 L261.7 305.4 L262.6 305.4 L263.6 306.8 L265.3 304.0 L266.3 305.1 L267.4 304.3 L268.4 305.0 L269.5 304.3 L270.5 304.0 L271.6 305.7 L272.8 308.0 L273.9 306.3 L275.1 306.4 L276.2 306.6 L277.4 307.4 L279.1 303.4 L280.8 302.8 L282.0 309.1 L283.7 309.7 L284.8 307.4 L285.9 308.4 L286.9 308.2 L288.0 309.2 L289.0 306.1 L289.9 305.1 L290.9 303.5 L292.6 305.8 L293.6 304.1 L294.7 304.0 L295.7 302.2 L296.8 302.1 L297.8 301.8 L299.5 302.3 L301.2 295.4 L302.2 293.9 L303.2 293.8 L304.2 293.3 L305.2 293.1 L306.4 292.1 L307.5 293.7 L309.2 290.3 L310.4 292.1 L311.5 291.9 L312.7 292.6 L314.4 288.6 L315.5 288.2 L316.7 289.7 L317.8 290.2 L319.0 291.8 L320.1 293.1 L321.1 291.0 L322.0 289.3 L323.0 288.0 L324.0 288.1 L325.0 286.3 L326.5 292.6 L327.4 294.1 L328.4 292.9 L329.9 286.3 L331.0 285.6 L332.2 285.1 L333.4 281.9 L334.5 278.8 L335.6 276.9 L336.8 276.9 L337.9 276.5 L338.9 276.1 L339.8 276.3 L340.8 276.5 L342.5 282.8 L343.6 282.8 L344.8 281.1 L345.7 281.0 L346.6 282.8 L347.5 280.9 L348.5 282.1 L349.4 281.1 L351.1 282.8 L352.1 282.9 L353.2 282.4 L354.2 282.9 L355.3 282.3 L356.3 282.8 L357.5 281.2 L358.6 279.4 L359.6 278.6 L360.5 275.6 L361.5 273.1 L363.2 273.1 L364.7 267.3 L365.6 268.7 L366.6 269.0 L367.8 277.6 L369.5 284.0 L370.7 283.0 L371.8 283.1 L373.0 282.8 L374.7 278.8 L376.4 277.6 L377.5 273.0 L378.7 270.2 L379.7 270.2 L380.6 268.7 L381.6 267.9 L382.5 267.5 L383.5 265.4 L384.4 264.4 L385.5 266.5 L387.0 268.8 L388.1 267.5 L389.3 267.7 L390.5 269.4 L391.6 269.4 L392.8 271.9 L393.9 271.7 L395.6 264.2 L397.4 261.9 L399.1 257.3 L400.2 257.1 L401.4 255.0 L403.1 256.8 L404.8 248.1 L406.0 243.0 L407.7 244.7 L408.9 244.1 L410.0 241.8 L411.7 241.8 L412.9 245.8 L414.6 237.2 L416.3 235.5 L417.5 234.1 L418.6 230.9 L419.8 228.4 L420.9 224.6 L422.0 222.7 L423.2 222.4 L424.3 221.2 L425.5 224.6 L427.2 217.7 L428.9 213.1 L430.6 209.1 L431.8 212.0 L433.0 208.7 L434.1 206.2 L435.2 207.4 L436.1 203.2 L437.0 201.6 L438.7 202.8 L439.8 212.0 L441.0 209.6 L442.1 209.7 L443.3 216.0 L444.8 221.7 L445.6 217.1 L447.3 214.3 L448.5 217.4 L449.6 221.7 L450.7 217.7 L451.9 220.0 L453.6 216.6 L454.6 217.3 L455.5 219.5 L456.5 220.6 L457.6 221.0 L458.8 218.9 L459.7 218.4 L460.7 218.5 L461.6 217.7 L462.8 221.7 L464.5 224.0 L466.2 220.6 L467.4 219.6 L468.5 216.0 L469.4 215.5 L470.3 212.6 L472.0 217.7 L472.9 216.6 L473.9 215.9 L474.8 215.4 L476.0 213.5 L477.1 213.1 L478.5 209.0 L479.7 210.0 L481.4 216.9 L482.3 212.9 L483.2 210.6 L484.9 208.9 L486.6 216.9 L487.6 215.3 L488.5 215.5 L489.5 214.6 L490.5 213.8 L491.4 211.1 L492.4 208.9 L493.3 206.7 L494.3 204.9 L495.2 202.6 L496.4 201.7 L497.5 199.1 L498.6 202.6 L499.8 208.3 L501.0 207.9 L502.1 206.6 L503.8 211.2 L505.0 208.9 L506.1 213.5 L507.3 215.7 L508.4 216.1 L509.6 216.9 L510.8 215.9 L511.9 213.5 L513.0 213.1 L514.2 212.9 L515.3 210.0 L516.5 210.9 L517.6 213.5 L518.8 212.5 L519.9 210.0 L521.0 209.3 L522.2 209.5 L523.4 207.4 L524.5 203.7 L525.6 207.0 L526.8 207.7 L528.0 204.0 L529.1 200.9 L530.8 200.9 L531.8 197.9 L532.7 196.0 L533.7 192.8 L534.8 197.4 L535.7 199.2 L536.6 199.7 L537.7 206.0 L539.4 200.9 L541.1 199.1 L542.1 195.9 L543.0 194.1 L544.0 192.2 L545.2 183.6 L546.3 179.6 L548.0 181.9 L549.1 179.8 L550.3 179.6 L551.5 174.4 L553.2 169.9 L554.9 161.2 L556.6 158.9 L558.4 165.8 L559.6 163.1 L560.9 158.2 L562.6 165.1 L563.7 156.5 L564.9 154.3 L566.0 150.0 L567.2 147.3 L568.9 145.6 L570.1 136.4 L571.8 131.3 L573.5 119.2 L574.6 124.4 L575.2 143.9 L576.4 137.6 L578.1 143.9 L579.6 160.5 L581.0 154.2 L582.7 145.0 L584.4 140.4 L586.1 148.5 L587.9 143.9 L589.0 145.2 L590.2 145.1 L591.3 145.0 L592.3 144.3 L593.2 142.6 L594.2 141.6 L595.9 147.9 L596.9 146.5 L597.8 144.5 L598.8 143.3 L599.9 139.9 L601.1 139.6 L602.2 137.0 L603.3 135.1 L604.5 132.4 L605.6 130.1 L607.4 130.7 L608.3 129.2 L609.3 125.2 L610.2 122.6 L611.2 123.6 L612.1 122.9 L613.1 122.6 L614.2 118.7 L615.4 116.3 L616.6 124.9 L617.5 121.2 L618.5 118.6 L619.4 115.8 L620.4 114.5 L621.3 114.7 L622.3 114.0 L623.5 109.0 L624.6 105.4 L625.7 106.0 L626.7 119.8 L628.0 114.6 L629.8 107.7 L631.0 104.6 L632.1 102.0 L633.2 99.8 L634.3 99.7 L635.2 101.1 L636.1 100.3 L637.2 98.2 L638.4 96.8 L639.5 96.4 L640.7 96.2 L641.6 95.3 L642.6 94.3 L643.5 92.8 L644.1 97.4 L645.3 90.9 L646.4 95.4 L647.3 92.5 L648.2 90.5 L649.2 87.5 L650.1 84.9 L651.0 82.2 L652.8 87.4 L654.5 93.1 L655.9 105.8 L656.9 99.8 L657.9 93.7 L659.0 89.2 L660.2 87.4 L661.2 84.2 L662.1 80.9 L663.1 78.2 L664.2 75.9 L665.4 72.6 L666.5 71.9 L667.7 74.2 L668.9 71.0 L670.0 66.2 L671.7 70.2 L673.4 74.8 L674.6 72.7 L675.7 72.4 L676.9 71.3 L678.0 73.1 L679.0 70.8 L679.9 67.4 L680.9 64.4 L682.6 63.3 L684.1 69.6 L684.3 76.5 L684.9 69.6 L686.0 67.1 L687.2 65.6 L688.4 62.5 L689.5 59.3 L691.2 44.9 L692.4 52.4 L693.5 46.6 L694.1 55.3 L694.9 70.8 L696.4 66.7 L697.5 63.3 L698.6 61.8 L699.8 59.9 L701.0 64.1 L702.1 66.7 L702.7 60.4 L703.7 57.4 L704.6 56.7 L705.6 54.7 L707.3 58.7 L708.5 54.9 L709.6 52.4 L710.7 49.5 L711.9 51.2 L713.0 45.5 L714.8 52.4 L715.9 59.9 L717.0 63.0 L718.2 67.3 L719.9 77.6 L721.1 81.1 L722.6 74.8 L723.9 80.5 L724.8 82.4 L725.7 82.8 L726.8 82.8 L727.9 82.7 L729.0 82.6"/></defs><use href="#eq" fill="none" stroke="#5050dc" stroke-opacity="0.45" stroke-width="1.8" stroke-linejoin="round"/><use href="#eq" fill="none" stroke="#3434cc" stroke-width="1.25" stroke-linejoin="round" shape-rendering="crispEdges"/><rect x="369.5" y="457.5" width="9" height="9" fill="#4848f8" stroke="#222" stroke-width="1"/><text x="384" y="466.5" font-size="13" fill="#000" letter-spacing="0.06">Total Equity</text></svg>
<div class="ytitle" style="left:168px;top:746.5px">Yearly Performance Summary</div>
<div id="vscroll"></div><div id="hscroll"></div><div id="corner"></div>
<div class="abs" style="left:849px;top:116px;width:15px;height:15px;background:linear-gradient(to right,#d2defb,#c2d2f8 50%,#b6c8f4);border:1px solid #fff;box-shadow:0 0 0 1px #cdd8f0;border-radius:2px;box-sizing:border-box"></div>
<svg class="abs" style="left:852px;top:120px" width="9" height="7" viewBox="0 0 9 7"><path d="M1 5.5l3.5-3.6L8 5.5" stroke="#3c5690" stroke-width="2" fill="none"/></svg>
<div class="abs" style="left:849px;top:146px;width:15px;height:57px;background:linear-gradient(to right,#d2defb,#c2d2f8 50%,#b6c8f4);border:1px solid #fff;box-shadow:0 0 0 1px #cdd8f0;border-radius:2px;box-sizing:border-box"></div>
<div class="abs" style="left:853px;top:170px;width:7px;height:1px;background:#eef4fe"></div>
<div class="abs" style="left:854px;top:171px;width:7px;height:1px;background:#8ca4dc"></div>
<div class="abs" style="left:853px;top:172px;width:7px;height:1px;background:#eef4fe"></div>
<div class="abs" style="left:854px;top:173px;width:7px;height:1px;background:#8ca4dc"></div>
<div class="abs" style="left:853px;top:174px;width:7px;height:1px;background:#eef4fe"></div>
<div class="abs" style="left:854px;top:175px;width:7px;height:1px;background:#8ca4dc"></div>
<div class="abs" style="left:853px;top:176px;width:7px;height:1px;background:#eef4fe"></div>
<div class="abs" style="left:854px;top:177px;width:7px;height:1px;background:#8ca4dc"></div>
<div class="abs" style="left:849px;top:745px;width:15px;height:15px;background:linear-gradient(to right,#d2defb,#c2d2f8 50%,#b6c8f4);border:1px solid #fff;box-shadow:0 0 0 1px #cdd8f0;border-radius:2px;box-sizing:border-box"></div>
<svg class="abs" style="left:852px;top:749px" width="9" height="7" viewBox="0 0 9 7"><path d="M1 1.5l3.5 3.6L8 1.5" stroke="#3c5690" stroke-width="2" fill="none"/></svg>
<div class="abs" style="left:7px;top:762px;width:14px;height:14px;background:linear-gradient(#d2defb,#c2d2f8 50%,#b6c8f4);border:1px solid #fff;box-shadow:0 0 0 1px #cdd8f0;border-radius:2px;box-sizing:border-box"></div>
<svg class="abs" style="left:10px;top:764px" width="7" height="9" viewBox="0 0 7 9"><path d="M5.5 1L1.9 4.5 5.5 8" stroke="#3c5690" stroke-width="2" fill="none"/></svg>
<div class="abs" style="left:24px;top:762px;width:636px;height:14px;background:linear-gradient(#d2defb,#c2d2f8 50%,#b6c8f4);border:1px solid #fff;box-shadow:0 0 0 1px #cdd8f0;border-radius:2px;box-sizing:border-box"></div>
<div class="abs" style="left:338px;top:766px;width:1px;height:6px;background:#eef4fe"></div>
<div class="abs" style="left:339px;top:767px;width:1px;height:6px;background:#8ca4dc"></div>
<div class="abs" style="left:340px;top:766px;width:1px;height:6px;background:#eef4fe"></div>
<div class="abs" style="left:341px;top:767px;width:1px;height:6px;background:#8ca4dc"></div>
<div class="abs" style="left:342px;top:766px;width:1px;height:6px;background:#eef4fe"></div>
<div class="abs" style="left:343px;top:767px;width:1px;height:6px;background:#8ca4dc"></div>
<div class="abs" style="left:344px;top:766px;width:1px;height:6px;background:#eef4fe"></div>
<div class="abs" style="left:345px;top:767px;width:1px;height:6px;background:#8ca4dc"></div>
<div class="abs" style="left:832px;top:762px;width:15px;height:14px;background:linear-gradient(#d2defb,#c2d2f8 50%,#b6c8f4);border:1px solid #fff;box-shadow:0 0 0 1px #cdd8f0;border-radius:2px;box-sizing:border-box"></div>
<svg class="abs" style="left:836px;top:764px" width="7" height="9" viewBox="0 0 7 9"><path d="M1.5 1l3.6 3.5L1.5 8" stroke="#3c5690" stroke-width="2" fill="none"/></svg>
<div id="statusbar"></div>
<div class="abs tah" style="left:5px;top:785.5px;letter-spacing:0.2px">Done</div>
<div class="abs" style="left:468px;top:782px;width:1px;height:18px;background:#c6c3b0"></div>
<div class="abs" style="left:469px;top:782px;width:1px;height:18px;background:#fff"></div>
<div class="abs" style="left:492px;top:782px;width:1px;height:18px;background:#c6c3b0"></div>
<div class="abs" style="left:493px;top:782px;width:1px;height:18px;background:#fff"></div>
<div class="abs" style="left:516px;top:782px;width:1px;height:18px;background:#c6c3b0"></div>
<div class="abs" style="left:517px;top:782px;width:1px;height:18px;background:#fff"></div>
<div class="abs" style="left:540px;top:782px;width:1px;height:18px;background:#c6c3b0"></div>
<div class="abs" style="left:541px;top:782px;width:1px;height:18px;background:#fff"></div>
<div class="abs" style="left:564px;top:782px;width:1px;height:18px;background:#c6c3b0"></div>
<div class="abs" style="left:565px;top:782px;width:1px;height:18px;background:#fff"></div>
<div class="abs" style="left:588px;top:782px;width:1px;height:18px;background:#c6c3b0"></div>
<div class="abs" style="left:589px;top:782px;width:1px;height:18px;background:#fff"></div>
<div class="abs" style="left:612px;top:782px;width:1px;height:18px;background:#c6c3b0"></div>
<div class="abs" style="left:613px;top:782px;width:1px;height:18px;background:#fff"></div>
<div class="abs" style="left:766px;top:782px;width:1px;height:18px;background:#c6c3b0"></div>
<div class="abs" style="left:767px;top:782px;width:1px;height:18px;background:#fff"></div>
<svg class="abs" style="left:619px;top:782px" width="15" height="17" viewBox="0 0 15 17"><path d="M3.6 1.6l8.6-1.2 1.2 9.6-8.2 1.8z" fill="#2f7fe6" stroke="#1d4fa8" stroke-width=".9"/><path d="M5 2.8l6.2-.9.8 6.4-5.8 1.3z" fill="#86ccff"/><path d="M5 2.8l6.2-.9.3 2.6-6.2 2z" fill="#c4e8ff"/><path d="M2.4 12l9-2 2.2 2.6-8.8 3.6z" fill="#6a7488" stroke="#3a4258" stroke-width=".8"/><path d="M1.4 4.2l2.4-1 1 8.2-2.4 1z" fill="#a8b0c4" stroke="#5a6278" stroke-width=".7"/></svg>
<div class="abs tah" style="left:636.5px;top:785.5px;letter-spacing:-0.2px">My Computer</div>
<svg class="abs" style="left:778px;top:783px" width="14" height="14" viewBox="0 0 14 14"><circle cx="5.6" cy="5.6" r="4.3" fill="#3a80e0" stroke="#98a8c0" stroke-width="1.2"/><path d="M3.4 5.6h4.4M5.6 3.4v4.4" stroke="#fff" stroke-width="1.4"/><path d="M8.8 8.8l3.8 3.8" stroke="#b08040" stroke-width="2.2" stroke-linecap="round"/></svg>
<div class="abs tah" style="left:794px;top:785.5px;letter-spacing:0.3px">100%</div>
<svg class="abs" style="left:837px;top:790px" width="6" height="4" viewBox="0 0 6 4"><path d="M0 0.3h6L3 3.6z" fill="#000"/></svg>
<div class="abs" style="left:862px;top:797px;width:2px;height:2px;background:#b8b4a2;box-shadow:1px 1px 0 #fff"></div><div class="abs" style="left:858px;top:797px;width:2px;height:2px;background:#b8b4a2;box-shadow:1px 1px 0 #fff"></div><div class="abs" style="left:854px;top:797px;width:2px;height:2px;background:#b8b4a2;box-shadow:1px 1px 0 #fff"></div><div class="abs" style="left:862px;top:793px;width:2px;height:2px;background:#b8b4a2;box-shadow:1px 1px 0 #fff"></div><div class="abs" style="left:858px;top:793px;width:2px;height:2px;background:#b8b4a2;box-shadow:1px 1px 0 #fff"></div><div class="abs" style="left:862px;top:789px;width:2px;height:2px;background:#b8b4a2;box-shadow:1px 1px 0 #fff"></div>
</body>
</html>
